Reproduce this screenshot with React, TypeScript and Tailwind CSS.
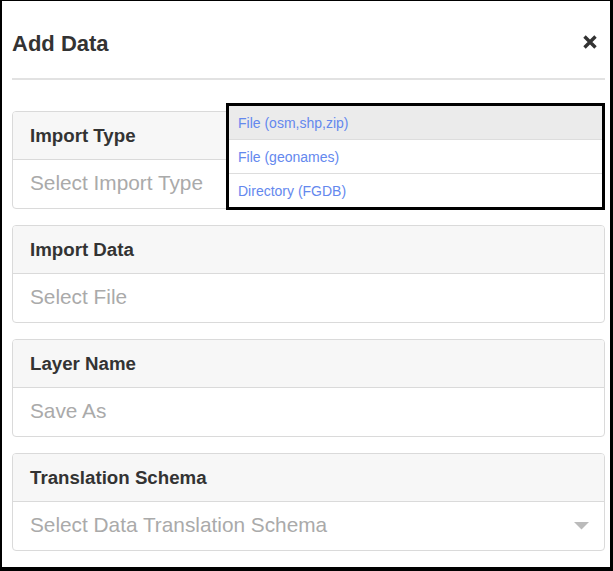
import React from "react";

const panels = [
  { title: "Import Type", placeholder: "Select Import Type", arrow: false },
  { title: "Import Data", placeholder: "Select File", arrow: false },
  { title: "Layer Name", placeholder: "Save As", arrow: false },
  { title: "Translation Schema", placeholder: "Select Data Translation Schema", arrow: true },
];

const options = ["File (osm,shp,zip)", "File (geonames)", "Directory (FGDB)"];

export default function App() {
  return (
    <div
      className="relative w-[613px] h-[571px] bg-white border-l-2 border-t border-r-[3px] border-b-4 border-black pl-[10px] pr-[5px] pt-[31px] text-[#333]"
      style={{ fontFamily: '"Liberation Sans", Arial, sans-serif' }}
    >
      <div className="flex items-start justify-between">
        <h1 className="text-[22px] leading-[24px] font-bold text-[#333]">Add Data</h1>
        <svg width="14" height="14" viewBox="0 0 14 14" className="mt-[3px] mr-[8px]">
          <path d="M1.5 1.5 L12.5 12.5 M12.5 1.5 L1.5 12.5" stroke="#333" strokeWidth="3.4" strokeLinecap="butt" />
        </svg>
      </div>
      <div className="mt-[22px] h-[2px] bg-[#e2e2e2]" />
      <div className="mt-[31px] flex flex-col gap-[16px]">
        {panels.map((p) => (
          <div key={p.title} className="border border-[#dadada] rounded-[4px] overflow-hidden">
            <div className="h-[48px] bg-[#f7f7f7] border-b border-[#dadada] flex items-center pl-[17px] pt-[2px] text-[18.7px] font-bold text-[#333]">
              {p.title}
            </div>
            <div className="h-[48px] flex items-center justify-between pl-[17px] pr-[15px] pb-[2px] text-[20.8px] text-[#aaaaaa]">
              <span>{p.placeholder}</span>
              {p.arrow && (
                <svg width="15" height="8" viewBox="0 0 15 8" className="mt-[2px]">
                  <path d="M0 0 L15 0 L7.5 7.5 Z" fill="#bbbbbb" />
                </svg>
              )}
            </div>
          </div>
        ))}
      </div>
      <div className="absolute left-[224px] top-[102px] w-[379px] h-[107px] border-[3px] border-black bg-white flex flex-col">
        {options.map((o, i) => (
          <div
            key={o}
            className={
              "flex-1 flex items-center pl-[9px] pt-[2px] text-[14px] text-[#6488ee] " +
              (i === 0 ? "bg-[#ebebeb]" : "border-t border-[#dddddd]")
            }
          >
            {o}
          </div>
        ))}
      </div>
    </div>
  );
}
